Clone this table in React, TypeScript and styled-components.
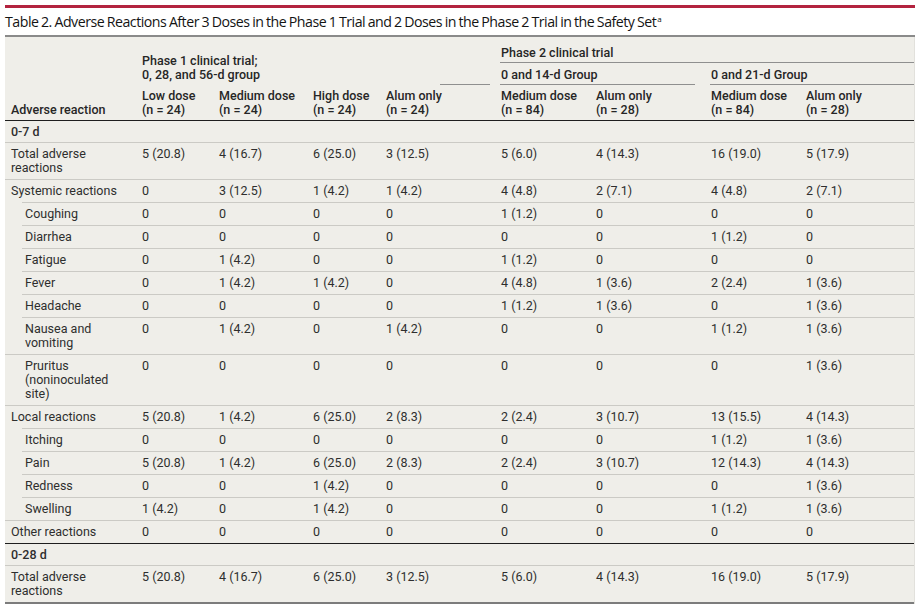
import React from "react";
import styled, { createGlobalStyle, css } from "styled-components";

const GlobalStyle = createGlobalStyle`
  html, body {
    margin: 0;
    padding: 0;
    background: #fff;
  }
  body {
    font-family: Roboto, "Liberation Sans", sans-serif;
    color: #2e2e2e;
  }
`;

type Row =
  | { kind: "section"; label: string }
  | {
      kind: "data";
      label: string[];
      values: string[];
      sub?: boolean;
      indentLine?: boolean;
      strong?: "dark" | "bottom";
    };

const rows: Row[] = [
  { kind: "section", label: "0-7 d" },
  {
    kind: "data",
    label: ["Total adverse", "reactions"],
    values: ["5 (20.8)", "4 (16.7)", "6 (25.0)", "3 (12.5)", "5 (6.0)", "4 (14.3)", "16 (19.0)", "5 (17.9)"],
  },
  {
    kind: "data",
    label: ["Systemic reactions"],
    indentLine: true,
    values: ["0", "3 (12.5)", "1 (4.2)", "1 (4.2)", "4 (4.8)", "2 (7.1)", "4 (4.8)", "2 (7.1)"],
  },
  { kind: "data", label: ["Coughing"], sub: true, indentLine: true, values: ["0", "0", "0", "0", "1 (1.2)", "0", "0", "0"] },
  { kind: "data", label: ["Diarrhea"], sub: true, indentLine: true, values: ["0", "0", "0", "0", "0", "0", "1 (1.2)", "0"] },
  { kind: "data", label: ["Fatigue"], sub: true, indentLine: true, values: ["0", "1 (4.2)", "0", "0", "1 (1.2)", "0", "0", "0"] },
  {
    kind: "data",
    label: ["Fever"],
    sub: true,
    indentLine: true,
    values: ["0", "1 (4.2)", "1 (4.2)", "0", "4 (4.8)", "1 (3.6)", "2 (2.4)", "1 (3.6)"],
  },
  {
    kind: "data",
    label: ["Headache"],
    sub: true,
    indentLine: true,
    values: ["0", "0", "0", "0", "1 (1.2)", "1 (3.6)", "0", "1 (3.6)"],
  },
  {
    kind: "data",
    label: ["Nausea and", "vomiting"],
    sub: true,
    values: ["0", "1 (4.2)", "0", "1 (4.2)", "0", "0", "1 (1.2)", "1 (3.6)"],
  },
  {
    kind: "data",
    label: ["Pruritus", "(noninoculated", "site)"],
    sub: true,
    values: ["0", "0", "0", "0", "0", "0", "0", "1 (3.6)"],
  },
  {
    kind: "data",
    label: ["Local reactions"],
    indentLine: true,
    values: ["5 (20.8)", "1 (4.2)", "6 (25.0)", "2 (8.3)", "2 (2.4)", "3 (10.7)", "13 (15.5)", "4 (14.3)"],
  },
  { kind: "data", label: ["Itching"], sub: true, indentLine: true, values: ["0", "0", "0", "0", "0", "0", "1 (1.2)", "1 (3.6)"] },
  {
    kind: "data",
    label: ["Pain"],
    sub: true,
    indentLine: true,
    values: ["5 (20.8)", "1 (4.2)", "6 (25.0)", "2 (8.3)", "2 (2.4)", "3 (10.7)", "12 (14.3)", "4 (14.3)"],
  },
  { kind: "data", label: ["Redness"], sub: true, indentLine: true, values: ["0", "0", "1 (4.2)", "0", "0", "0", "0", "1 (3.6)"] },
  {
    kind: "data",
    label: ["Swelling"],
    sub: true,
    values: ["1 (4.2)", "0", "1 (4.2)", "0", "0", "0", "1 (1.2)", "1 (3.6)"],
  },
  {
    kind: "data",
    label: ["Other reactions"],
    strong: "dark",
    values: ["0", "0", "0", "0", "0", "0", "0", "0"],
  },
  { kind: "section", label: "0-28 d" },
  {
    kind: "data",
    label: ["Total adverse", "reactions"],
    strong: "bottom",
    values: ["5 (20.8)", "4 (16.7)", "6 (25.0)", "3 (12.5)", "5 (6.0)", "4 (14.3)", "16 (19.0)", "5 (17.9)"],
  },
];

const colWidths = [131, 77, 94, 73, 115, 95, 115, 95, 114];

const subHeads = [
  ["Low dose", "(n = 24)"],
  ["Medium dose", "(n = 24)"],
  ["High dose", "(n = 24)"],
  ["Alum only", "(n = 24)"],
  ["Medium dose", "(n = 84)"],
  ["Alum only", "(n = 28)"],
  ["Medium dose", "(n = 84)"],
  ["Alum only", "(n = 28)"],
];

const lines = (parts: string[]) =>
  parts.map((p, i) => (
    <React.Fragment key={i}>
      {i > 0 && <br />}
      {p}
    </React.Fragment>
  ));

export default function App() {
  return (
    <>
      <GlobalStyle />
      <Page>
        <RedRule />
        <Title>
          Table 2. Adverse Reactions After 3 Doses in the Phase 1 Trial and 2 Doses in the Phase 2 Trial in the Safety
          Set<Sup>a</Sup>
        </Title>
        <GrayRule />
        <Table>
          <colgroup>
            {colWidths.map((w, i) => (
              <col key={i} style={{ width: w }} />
            ))}
          </colgroup>
          <thead>
            <HeadRowA>
              <HeadCell rowSpan={3} $rule="dark">
                Adverse reaction
              </HeadCell>
              <HeadCell colSpan={4} rowSpan={2} $line="short">
                Phase 1 clinical trial;
                <br />
                0, 28, and 56-d group
              </HeadCell>
              <HeadCell colSpan={4} $line="end">
                Phase 2 clinical trial
              </HeadCell>
            </HeadRowA>
            <HeadRowB>
              <HeadCell colSpan={2} $line="mid">
                0 and 14-d Group
              </HeadCell>
              <HeadCell colSpan={2} $line="end">
                0 and 21-d Group
              </HeadCell>
            </HeadRowB>
            <HeadRowC>
              {subHeads.map((h, i) => (
                <HeadCell key={i} $rule="dark">
                  {lines(h)}
                </HeadCell>
              ))}
            </HeadRowC>
          </thead>
          <tbody>
            {rows.map((r, i) =>
              r.kind === "section" ? (
                <tr key={i}>
                  <SectionCell colSpan={9}>{r.label}</SectionCell>
                </tr>
              ) : (
                <tr key={i}>
                  <LabelCell $sub={r.sub} $indentLine={r.indentLine} $rule={r.strong}>
                    {lines(r.label)}
                  </LabelCell>
                  {r.values.map((v, j) => (
                    <Cell key={j} $rule={r.strong}>
                      {v}
                    </Cell>
                  ))}
                </tr>
              )
            )}
          </tbody>
        </Table>
      </Page>
    </>
  );
}

const Page = styled.div`
  width: 910px;
  padding: 5px 0 0 5px;
`;

const RedRule = styled.div`
  height: 2.5px;
  background: #b3233f;
`;

const Title = styled.div`
  height: 27px;
  line-height: 27px;
  font-family: "Open Sans", Roboto, sans-serif;
  font-size: 14.2px;
  letter-spacing: -0.5px;
  word-spacing: -0.6px;
  color: #141414;
  white-space: nowrap;
`;

const Sup = styled.sup`
  font-size: 8px;
  line-height: 0;
  vertical-align: 5px;
  margin-left: 1px;
`;

const GrayRule = styled.div`
  height: 2px;
  background: #8a8a8a;
`;

const Table = styled.table`
  width: 909px;
  table-layout: fixed;
  border-collapse: separate;
  border-spacing: 0;
  background: #efeee9;
  font-size: 12.5px;
  line-height: 14px;
  box-shadow: 1px 0 0 #e2e1dc;
`;

const HeadRowA = styled.tr`
  height: 26px;
`;
const HeadRowB = styled.tr`
  height: 22px;
`;
const HeadRowC = styled.tr`
  height: 36px;
`;

const lineStyles = {
  short: css`
    background: linear-gradient(#8f8f8f, #8f8f8f) right 5px bottom / 50px 1px no-repeat;
  `,
  mid: css`
    background: linear-gradient(#8f8f8f, #8f8f8f) left 5px bottom / calc(100% - 15px) 1px no-repeat;
  `,
  end: css`
    background: linear-gradient(#8f8f8f, #8f8f8f) left 5px bottom / calc(100% - 5px) 1px no-repeat;
  `,
};

const HeadCell = styled.th<{ $rule?: "dark"; $line?: "short" | "mid" | "end" }>`
  text-align: left;
  vertical-align: bottom;
  font-weight: 500;
  padding: 0 6px 3px 6px;
  white-space: nowrap;
  color: #262626;
  ${(p) => p.$line && lineStyles[p.$line]}
  ${(p) =>
    p.$rule === "dark" &&
    css`
      border-bottom: 1.5px solid #1e1e1e;
    `}
`;

const ruleStyles = {
  dark: css`
    border-bottom: 1.5px solid #1e1e1e;
  `,
  bottom: css`
    border-bottom: 2px solid #7c7c7c;
  `,
};

const Cell = styled.td<{ $rule?: "dark" | "bottom" }>`
  vertical-align: top;
  padding: 4px 6px 4px 6px;
  border-bottom: 1px solid #cbcac5;
  white-space: nowrap;
  ${(p) => p.$rule && ruleStyles[p.$rule]}
`;

const LabelCell = styled(Cell)<{ $sub?: boolean; $indentLine?: boolean }>`
  padding-left: ${(p) => (p.$sub ? "20px" : "6px")};
  ${(p) =>
    p.$indentLine &&
    css`
      border-bottom-color: transparent;
      background: linear-gradient(#cbcac5, #cbcac5) left 17px bottom / calc(100% - 17px) 1px no-repeat;
      background-origin: border-box;
    `}
`;

const SectionCell = styled.td`
  padding: 4px 6px 3px 6px;
  font-weight: 500;
  border-bottom: 1px solid #cbcac5;
`;
